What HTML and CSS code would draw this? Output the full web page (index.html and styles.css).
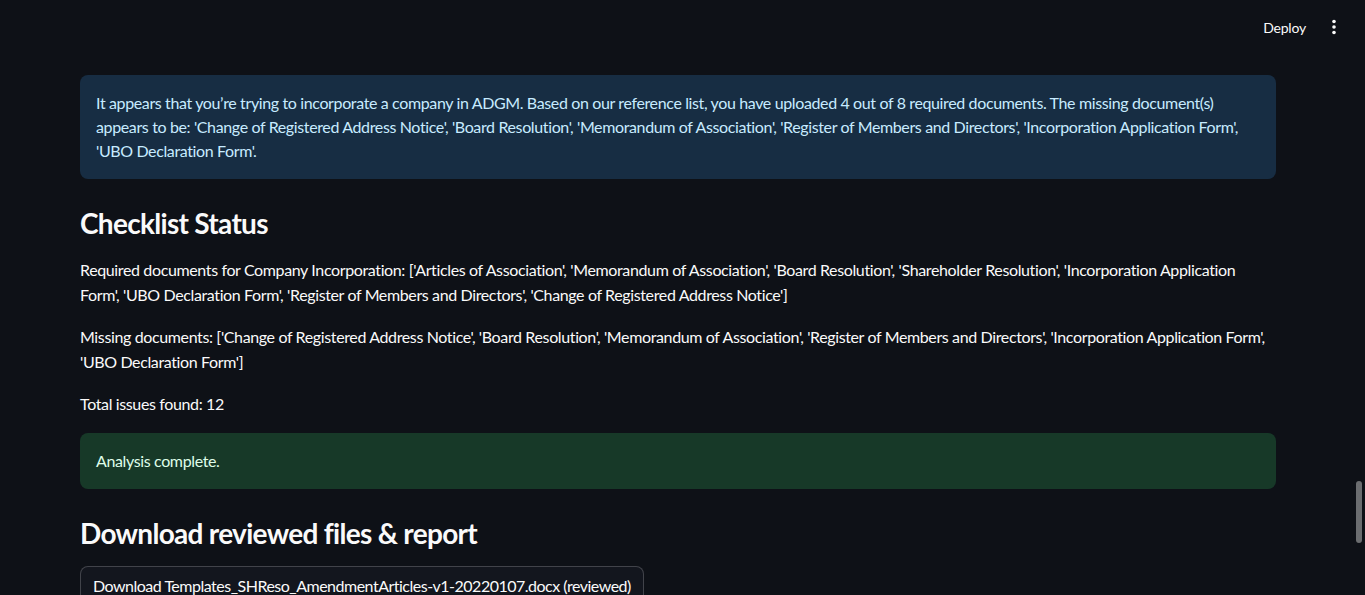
FILE: index.html
```html
<!DOCTYPE html>
<html lang="en">
<head>
<meta charset="utf-8">
<title>Document Review</title>
<link rel="stylesheet" href="styles.css">
</head>
<body>
<header class="topbar">
  <button class="deploy">Deploy</button>
  <button class="menu" aria-label="Main menu">
    <svg width="16" height="16" viewBox="0 0 16 16"><circle cx="8" cy="2.5" r="1.8" fill="#fafafa"/><circle cx="8" cy="8" r="1.8" fill="#fafafa"/><circle cx="8" cy="13.5" r="1.8" fill="#fafafa"/></svg>
  </button>
</header>
<main class="main">
  <div class="alert alert-info">It appears that you’re trying to incorporate a company in ADGM. Based on our reference list, you have uploaded 4 out of 8 required documents. The missing document(s) appears to be: 'Change of Registered Address Notice', 'Board Resolution', 'Memorandum of Association', 'Register of Members and Directors', 'Incorporation Application Form', 'UBO Declaration Form'.</div>
  <section class="group">
    <h3 class="heading">Checklist Status</h3>
    <p class="text">Required documents for Company Incorporation: ['Articles of Association', 'Memorandum of Association', 'Board Resolution', 'Shareholder Resolution', 'Incorporation Application Form', 'UBO Declaration Form', 'Register of Members and Directors', 'Change of Registered Address Notice']</p>
  </section>
  <p class="text">Missing documents: ['Change of Registered Address Notice', 'Board Resolution', 'Memorandum of Association', 'Register of Members and Directors', 'Incorporation Application Form', 'UBO Declaration Form']</p>
  <p class="text">Total issues found: 12</p>
  <div class="alert alert-success">Analysis complete.</div>
  <section class="group">
    <h3 class="heading">Download reviewed files &amp; report</h3>
    <div><button class="download">Download Templates_SHReso_AmendmentArticles-v1-20220107.docx (reviewed)</button></div>
  </section>
</main>
<div class="scrollbar"></div>
</body>
</html>
```
FILE: styles.css
```css
html, body {
  margin: 0;
  padding: 0;
  background: #0e1117;
  color: #fafafa;
  font-family: Lato, "Noto Sans", sans-serif;
  font-size: 16px;
  letter-spacing: -0.37px;
  overflow: hidden;
  height: 595px;
}
.topbar {
  height: 54px;
  display: flex;
  align-items: center;
  justify-content: flex-end;
  padding-right: 19px;
  gap: 8px;
}
.deploy {
  background: transparent;
  border: none;
  color: #fafafa;
  font-family: inherit;
  font-size: 14px;
  letter-spacing: -0.2px;
  padding: 4px 8px;
}
.menu {
  background: transparent;
  border: none;
  padding: 4px;
  display: flex;
  align-items: center;
}
.main {
  padding: 21px 0 0 80px;
  width: 1196px;
  display: flex;
  flex-direction: column;
  gap: 16px;
}
.alert {
  border-radius: 8px;
  padding: 16px;
  line-height: 24px;
}
.alert-info {
  background: #172d43;
  color: #c7ebff;
}
.alert-success {
  background: #173928;
  color: #dffde9;
}
.group {
  display: flex;
  flex-direction: column;
  gap: 16px;
}
.heading {
  margin: 0;
  padding: 12px 0 0;
  font-size: 28px;
  font-weight: 700;
  letter-spacing: -0.7px;
  line-height: 33.6px;
}
.text {
  margin: 0;
  line-height: 25.6px;
}
.download {
  background: #13161e;
  border: 1px solid rgba(250,250,250,0.2);
  border-radius: 8px;
  color: #fafafa;
  font-family: inherit;
  font-size: 16px;
  letter-spacing: -0.5px;
  padding: 8px 12px;
  min-height: 40px;
  line-height: 22px;
}
.scrollbar {
  position: fixed;
  right: 3px;
  top: 481px;
  width: 6px;
  height: 62px;
  border-radius: 3px;
  background: #6b6d70;
}
```
